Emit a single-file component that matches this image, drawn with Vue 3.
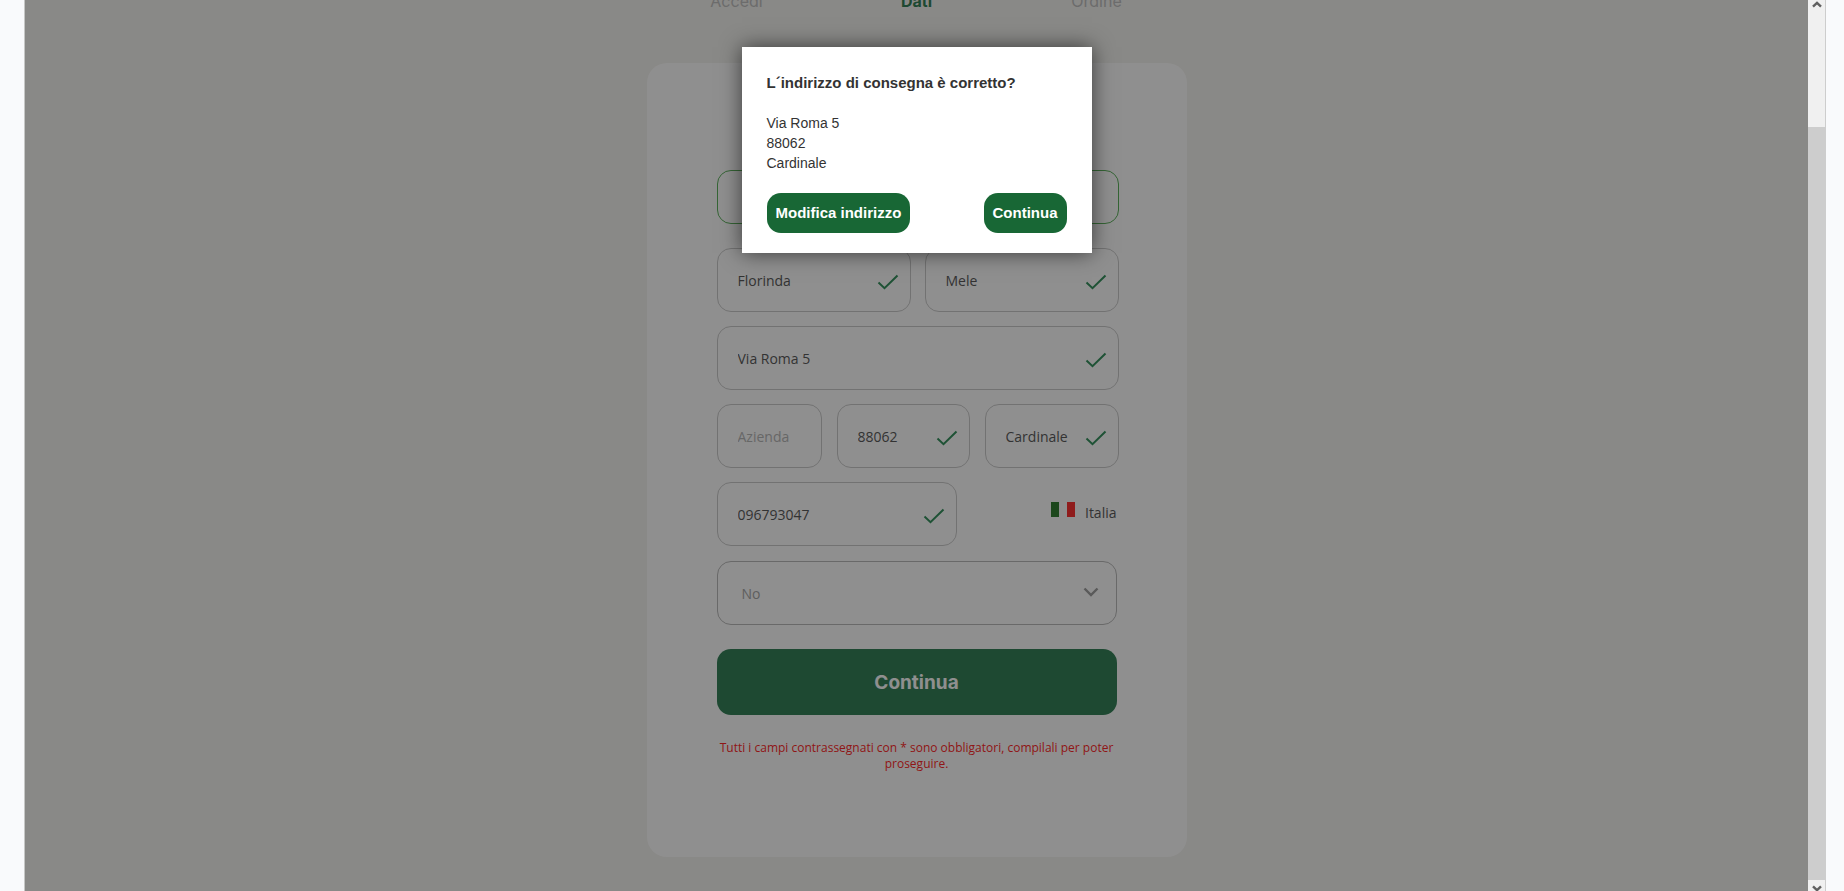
<script setup>
import { ref } from 'vue'

const steps = [
  { label: 'Accedi', active: false },
  { label: 'Dati', active: true },
  { label: 'Ordine', active: false },
]

const rows = ref([
  { kind: 'half', fields: [
    { id: 'nome', label: 'Nome', value: 'Florinda', valid: true },
    { id: 'cognome', label: 'Cognome', value: 'Mele', valid: true },
  ] },
  { kind: 'full', fields: [
    { id: 'via', label: 'Via', value: 'Via Roma 5', valid: true },
  ] },
  { kind: 'third', fields: [
    { id: 'azienda', label: 'Azienda', value: '', placeholder: 'Azienda', valid: false },
    { id: 'cap', label: 'CAP', value: '88062', valid: true },
    { id: 'citta', label: 'Città', value: 'Cardinale', valid: true },
  ] },
  { kind: 'phone', country: 'Italia', fields: [
    { id: 'telefono', label: 'Telefono', value: '096793047', valid: true },
  ] },
])

const email = ref('')
const option = ref('No')
</script>

<template>
  <div class="frame">
    <div class="viewport">
      <main class="page">
        <ol class="steps">
          <li v-for="s in steps" :key="s.label" :class="{ active: s.active }">{{ s.label }}</li>
        </ol>
        <form class="card" @submit.prevent>
          <input v-model="email" class="input email" type="email" aria-label="Email" />
          <div v-for="row in rows" :key="row.kind" class="row" :class="row.kind">
            <div v-for="f in row.fields" :key="f.id" class="field">
              <input :id="f.id" v-model="f.value" class="input" type="text" :placeholder="f.placeholder" :aria-label="f.label" />
              <svg v-if="f.valid" class="check" viewBox="0 0 22 16" aria-hidden="true">
                <path d="M1.5 8.5 L7.5 14.2 L20.5 1.5" />
              </svg>
            </div>
            <div v-if="row.country" class="country">
              <svg class="flag" viewBox="0 0 24 15" aria-hidden="true">
                <rect width="8" height="15" fill="#327f32" />
                <rect x="8" width="8" height="15" fill="#ffffff" />
                <rect x="16" width="8" height="15" fill="#ff3232" />
              </svg>
              <span>{{ row.country }}</span>
            </div>
          </div>
          <div class="select-wrap">
            <select v-model="option" class="select" aria-label="Opzione">
              <option>No</option>
            </select>
            <svg class="chevron" viewBox="0 0 16 10" aria-hidden="true">
              <path d="M1.5 1.5 L8 8 L14.5 1.5" />
            </svg>
          </div>
          <button class="submit" type="submit">Continua</button>
          <p class="note">Tutti i campi contrassegnati con * sono obbligatori, compilali per poter proseguire.</p>
        </form>
      </main>

      <div class="overlay">
        <section class="dialog" role="dialog" aria-modal="true" aria-labelledby="dialog-title">
          <h2 id="dialog-title">L´indirizzo di consegna è corretto?</h2>
          <address>Via Roma 5<br />88062<br />Cardinale</address>
          <div class="actions">
            <button type="button">Modifica indirizzo</button>
            <button type="button">Continua</button>
          </div>
        </section>
      </div>
    </div>

    <div class="scrollbar" aria-hidden="true">
      <div class="arrow up">
        <svg viewBox="0 0 10 7"><path d="M1 5.6 L5 1.8 L9 5.6" /></svg>
      </div>
      <div class="thumb"></div>
      <div class="arrow down">
        <svg viewBox="0 0 10 7"><path d="M1 1.4 L5 5.2 L9 1.4" /></svg>
      </div>
    </div>
  </div>
</template>

<style>
body {
  background: #f9fafc;
}
</style>

<style scoped>
* {
  box-sizing: border-box;
}

.frame {
  display: flex;
  height: 100vh;
  margin: 0 18px 0 24px;
  border-left: 1px solid #c6c7c6;
  border-right: 1px solid #cdcdcd;
  overflow: hidden;
  font-family: "Open Sans", "Noto Sans", sans-serif;
}

.viewport {
  position: relative;
  flex: 1;
  overflow: hidden;
  background: #f5f4f0;
}

.page {
  width: 540px;
  max-width: 100%;
  margin: 0 auto;
}

.steps {
  display: grid;
  grid-template-columns: repeat(3, 1fr);
  margin: -11px 0 50px;
  padding: 0;
  list-style: none;
  text-align: center;
  font: 16px/24px Inter, sans-serif;
  color: #c0c0c0;
}

.steps .active {
  font-weight: 700;
  color: #368259;
}

.card {
  padding: 107px 70px 85px;
  border-radius: 20px;
  background: #ffffff;
}

.input,
.select {
  display: block;
  width: 100%;
  height: 64px;
  margin: 0;
  padding: 0 10px 0 20px;
  border: 1px solid #cccccc;
  border-radius: 14px;
  background: transparent;
  font: 14px/20px "Open Sans", "Noto Sans", sans-serif;
  color: #5c5c5c;
  outline: none;
}

.input::placeholder {
  color: #b8b8b8;
  opacity: 1;
}

.email {
  width: calc(100% + 2px);
  height: 54px;
  margin-bottom: 24px;
  border-color: #5fb45f;
}

.row {
  display: grid;
  gap: 14px;
  margin: 0 -2px 14px 0;
}

.half {
  grid-template-columns: 1fr 1fr;
}

.third {
  grid-template-columns: 105fr 133fr 134fr;
  gap: 15px;
}

.phone {
  grid-template-columns: 240fr 148fr;
}

.field {
  position: relative;
}

.check {
  position: absolute;
  top: 26px;
  right: 12px;
  width: 22px;
  height: 16px;
  fill: none;
  stroke: #37925f;
  stroke-width: 2;
}

.country {
  display: flex;
  justify-content: flex-end;
  align-items: flex-start;
  gap: 10px;
  padding: 20px 2px 0 0;
  font-size: 14px;
  line-height: 22px;
  color: #5c5c5c;
}

.flag {
  width: 24px;
  height: 15px;
}

.select-wrap {
  position: relative;
  margin: 15px 0 24px;
}

.select {
  appearance: none;
  padding: 2px 24px 0;
  border-color: #bbbbbb;
  color: #a8a8a8;
}

.chevron {
  position: absolute;
  top: 26px;
  right: 18px;
  width: 16px;
  height: 10px;
  fill: none;
  stroke: #a0a0a0;
  stroke-width: 2.4;
}

.submit {
  display: block;
  width: 100%;
  height: 66px;
  padding: 2px 0 0;
  border: 0;
  border-radius: 14px;
  background: #368259;
  color: #ffffff;
  font: 700 19px/24px Inter, sans-serif;
}

.note {
  margin: 25px 0 0;
  text-align: center;
  font-size: 12px;
  line-height: 16px;
  color: #ff2a2a;
}

.overlay {
  position: absolute;
  inset: 0;
  padding-top: 47px;
  background: rgba(0, 0, 0, 0.44);
}

.dialog {
  width: 350px;
  margin: 0 auto;
  padding: 25px 25px 20px;
  background: #ffffff;
  box-shadow: 0 0 20px rgba(0, 0, 0, 0.6);
  font-family: "Liberation Sans", Arial, sans-serif;
  color: #333333;
}

.dialog h2 {
  margin: 0 0 19px;
  font-size: 15px;
  line-height: 22px;
}

.dialog address {
  margin-bottom: 20px;
  font-size: 14px;
  font-style: normal;
  line-height: 20px;
}

.actions {
  display: flex;
  justify-content: space-between;
}

.actions button {
  height: 40px;
  padding: 0 9px;
  border: 0;
  border-radius: 14px;
  background: #186735;
  color: #ffffff;
  font: 700 15px/20px "Liberation Sans", Arial, sans-serif;
}

.scrollbar {
  display: flex;
  flex-direction: column;
  width: 17px;
  background: #f0f0f0;
}

.arrow {
  display: flex;
  flex: none;
  justify-content: center;
}

.arrow svg {
  width: 10px;
  height: 7px;
  fill: none;
  stroke: #606060;
  stroke-width: 2.4;
}

.up {
  height: 127px;
  padding-top: 1px;
}

.down {
  height: 11px;
  padding-top: 5px;
}

.thumb {
  flex: 1;
  background: #cdcdcd;
}
</style>
